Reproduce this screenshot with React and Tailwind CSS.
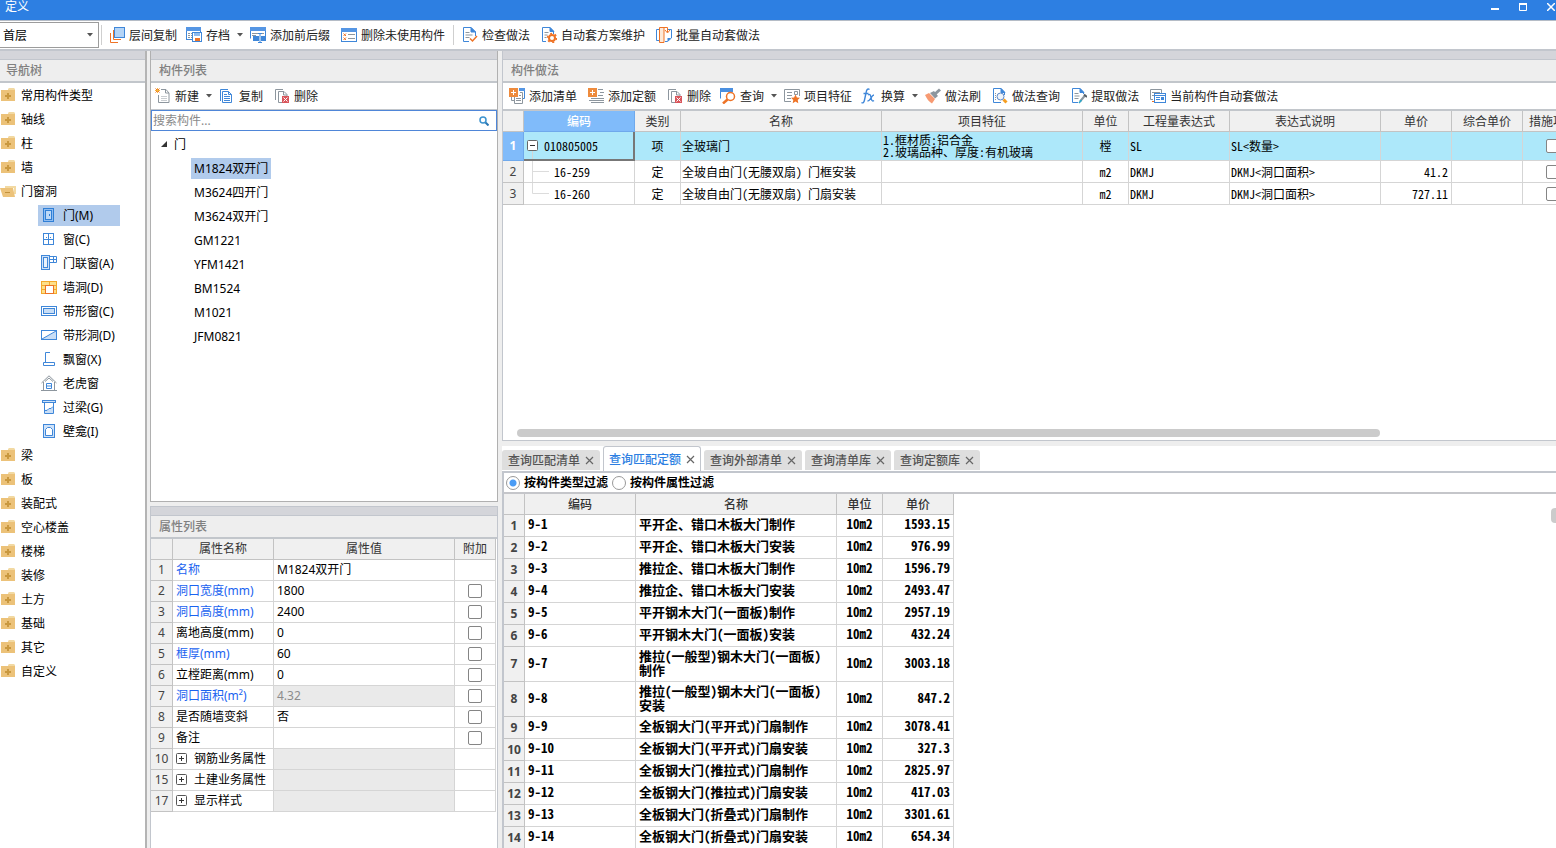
import React, { useState } from 'react';

const BLUE = '#3f87d9';
const ORANGE = '#ee7326';
const GRAY = '#8d969e';

const Svg = ({ children, w = 16, crisp = true, className = '' }) => (
  <svg
    width={w}
    height="16"
    viewBox={`0 0 ${w} 16`}
    fill="none"
    aria-hidden="true"
    shapeRendering={crisp ? 'crispEdges' : 'auto'}
    className={`shrink-0 ${className}`}
  >
    {children}
  </svg>
);

const Deleted = () => (
  <>
    <rect x="8" y="8" width="7" height="7" fill="#d9565c" />
    <path d="M9.5 9.5l4 4M13.5 9.5l-4 4" stroke="#fff" shapeRendering="auto" />
  </>
);

const icons = {
  layers: (
    <Svg>
      <path d="M1.5 6v9.5H9M4.5 3v9.5H12" stroke={ORANGE} shapeRendering="auto" />
      <rect x="5.500" y="0.500" width="10" height="10" fill="#b5d5f7" stroke={BLUE} shapeRendering="auto" />
    </Svg>
  ),
  archive: (
    <Svg crisp={false}>
      <rect x="0.5" y="0.5" width="14" height="12" fill="#fff" stroke={BLUE} />
      <rect width="15" height="4" fill="#5596e4" />
      <path d="M2 6.500h2M5 6.500h3M2 8.500h2M5 8.500h2M2 10.500h2M5 10.500h2" stroke={GRAY} />
      <rect x="6.500" y="5.500" width="9" height="9" fill="#fff" stroke={BLUE} />
      <rect x="8" y="6" width="6" height="3" fill="#8fbbee" />
      <rect x="9" y="11" width="5" height="3" fill={ORANGE} />
    </Svg>
  ),
  affix: (
    <Svg crisp={false}>
      <path d="M0.500 11.500V0.500h15v11" stroke={BLUE} />
      <rect width="16" height="4" fill="#5596e4" />
      <path d="M2 6.500h6M2 8.500h4M12 6.500h2" stroke={GRAY} />
      <rect x="3" y="9" width="6" height="5" fill={BLUE} />
      <rect x="11" y="9" width="5" height="5" fill={BLUE} />
      <path d="M10 6v9M8 6.500h4M8 15.500h4" stroke={BLUE} />
    </Svg>
  ),
  unused: (
    <Svg crisp={false}>
      <rect x="0.500" y="1.500" width="15" height="13" fill="#fff" stroke={BLUE} />
      <rect y="1" width="16" height="4" fill="#5596e4" />
      <path d="M2.500 6.500l2.500 2.500M5 6.500L2.500 9M2.500 10.500l2.500 2.500M5 10.500l-2.500 2.500" stroke={ORANGE} />
      <path d="M7 7.500h7M7 11.500h7" stroke={GRAY} />
    </Svg>
  ),
  check: (
    <Svg crisp={false}>
      <path d="M13.500 9V5L9 0.500H1.500v14H7" fill="#fff" stroke={BLUE} />
      <path d="M9 0.500V5h4.500z" fill={BLUE} stroke={BLUE} />
      <path d="M3.500 5.500h4M3.500 8h7M3.500 10.500h4" stroke={GRAY} />
      <path d="M8 11.500l2.500 2.500 4.500-5" stroke={ORANGE} strokeWidth="1.500" />
    </Svg>
  ),
  gear: (
    <Svg crisp={false}>
      <path d="M12.500 7V4.500L9 0.500H1.500v14H5" fill="#fff" stroke={BLUE} />
      <path d="M9 0.500v4h4z" fill={BLUE} stroke={BLUE} />
      <path d="M3.500 5.500h4M3.500 8h3M3.500 10.500h2" stroke={GRAY} />
      <circle cx="11" cy="11" r="3" fill="#fff" stroke={ORANGE} strokeWidth="2" />
      <circle cx="11" cy="11" r="4.500" stroke={ORANGE} strokeWidth="1.500" strokeDasharray="2 2.700" />
    </Svg>
  ),
  batch: (
    <Svg crisp={false}>
      <path d="M3 2.500H0.500v11H3M11 2.500h4.500V11l-4 3.500H9" stroke={BLUE} />
      <path d="M3.500 15.500V0.500H8v15z" fill="#fde9d8" stroke={ORANGE} />
      <path d="M6 0.500h5.500V5M9 3l2.500 3L14 3" stroke={ORANGE} />
      <path d="M15 11h-3.500v3.500z" fill={BLUE} />
    </Svg>
  ),
  create: (
    <Svg crisp={false}>
      <path d="M6 1.500h5l3 3.500v9.500H3.500V7" fill="#fff" stroke={GRAY} />
      <path d="M10.500 1.500V5H14" stroke={GRAY} />
      <path d="M6 8.500h6M6 10.500h6M6 12.500h6" stroke="#c9cdd1" />
      <path d="M0.500 0.500l4 4M4.500 0.500l-4 4" stroke={ORANGE} />
      <path d="M2.500 0v5M0 2.500h5" stroke="#f3b33c" />
    </Svg>
  ),
  copy: (
    <Svg crisp={false}>
      <path d="M1.500 13V1.500H9" stroke={BLUE} />
      <path d="M3.500 3.500h6l3 3v8h-9z" fill="#fff" stroke={BLUE} />
      <path d="M9.500 3.500v3h3" stroke={BLUE} />
      <path d="M5 6.500h3M5 8.500h6M5 10.500h6M5 12.500h6" stroke={BLUE} />
    </Svg>
  ),
  remove: (
    <Svg crisp={false}>
      <path d="M1.500 12V1.500H9" stroke={GRAY} />
      <path d="M8 14.500H4.500v-11H10l3 3V8" fill="#fff" stroke={GRAY} />
      <path d="M9.500 3.500V7H13" stroke={GRAY} />
      <Deleted />
    </Svg>
  ),
  addList: (
    <Svg crisp={false}>
      <path d="M10 1.500h5.500v9H14" stroke={BLUE} />
      <rect x="10" width="6" height="3" fill="#5596e4" />
      <path d="M2.500 9v3.500H5M11 4.500h2.500M5.500 9v6.500h8v-11M7 10.500h5M7 12.500h5M10 7.500h2" stroke={GRAY} />
      <rect width="9" height="9" fill="#ee8b3d" />
      <path d="M2 4.500h5M4.500 2v5" stroke="#fff" />
    </Svg>
  ),
  addQuota: (
    <Svg crisp={false}>
      <path d="M10 1.500h5M12 4.500h4M10 7.500h5M3 10.500h13M1 12.500h15M3 14.500h13" stroke={GRAY} />
      <rect width="9" height="9" fill="#ee8b3d" />
      <path d="M2 4.500h5M4.500 2v5" stroke="#fff" />
    </Svg>
  ),
  search: (
    <Svg crisp={false}>
      <path d="M0.500 10.500V1.500h12" stroke={BLUE} />
      <rect y="0" width="13" height="4" fill="#4a8fe0" />
      <circle cx="10.500" cy="8.500" r="4" fill="#fff" stroke={ORANGE} strokeWidth="1.500" />
      <path d="M7.500 11.500L3 15.500" stroke={ORANGE} strokeWidth="2.500" />
    </Svg>
  ),
  feature: (
    <Svg crisp={false}>
      <path d="M7 13.500H0.500v-12h15V8" fill="#fff" stroke={GRAY} />
      <path d="M3 4.500h5M3 7.500h5M3 10.500h4M10.500 3.500h3v3h-3z" stroke={GRAY} />
      <path d="M11.500 6.500l1.400 2.900 3.100.4-2.300 2.200.6 3.200-2.800-1.600-2.800 1.600.6-3.200L7 9.800l3.100-.4z" fill={ORANGE} />
    </Svg>
  ),
  fx: (
    <Svg crisp={false}>
      <path d="M8.500 1.500C6.500 0 5.500 2 5 5L3.500 12c-.5 2.500-1.500 3.500-3 2.500M2.500 5.500h5" stroke={BLUE} strokeWidth="1.400" />
      <path d="M7 7c2-1.500 2.500 0 3 2.500s1 4.500 3 3M13 7c-2.500 0-3.500 6-6.500 6" stroke={BLUE} strokeWidth="1.300" />
    </Svg>
  ),
  brush: (
    <Svg crisp={false}>
      <path d="M0 7l4-2 6 6-3 4.500C4 14 2 11 0 7z" fill="#f79a72" />
      <path d="M5 5l4-2 4 5-3 2.500z" fill={GRAY} />
      <path d="M10 6l5-4.500" stroke={GRAY} strokeWidth="3" />
    </Svg>
  ),
  inspect: (
    <Svg crisp={false}>
      <path d="M12.500 7V4.500L9 0.500H1.500v14H9" fill="#fff" stroke={BLUE} />
      <path d="M9 0.500v4h4z" fill={BLUE} stroke={BLUE} />
      <circle cx="8.500" cy="8.500" r="3.500" fill="#eef4fb" stroke="#5d89c9" />
      <path d="M3.500 5v8" stroke={GRAY} strokeDasharray="1 1" />
      <path d="M11.500 11.500l3 3" stroke="#f59d1f" strokeWidth="3" />
    </Svg>
  ),
  extract: (
    <Svg crisp={false}>
      <path d="M12.500 6V4.500L9 0.500H1.500v14H7" fill="#fff" stroke={BLUE} />
      <path d="M9 0.500v4h4z" fill={BLUE} stroke={BLUE} />
      <path d="M3.500 5.500h4M3.500 8h5M3.500 10.500h4" stroke={GRAY} />
      <path d="M9 13.500l5-6" stroke={GRAY} strokeWidth="2" />
      <path d="M13 6.500l3 2.500" stroke="#555e66" strokeWidth="2" />
      <path d="M8 15l2.500-3" stroke="#2aa7c9" strokeWidth="1.500" />
    </Svg>
  ),
  current: (
    <Svg crisp={false}>
      <path d="M3 11.500H0.500v-10h11V5M2 4.500h8M2 7.500h2" stroke={GRAY} />
      <path d="M2 13.500h2" stroke={ORANGE} />
      <rect x="4.500" y="5.500" width="11" height="9" fill="#fff" stroke={BLUE} />
      <path d="M5 7.500h10M6 9.500h4M6 11.500h4" stroke={BLUE} />
      <rect x="11" y="9" width="3" height="3" fill={BLUE} />
    </Svg>
  ),
  door: (
    <Svg crisp={false}>
      <rect x="2.500" y="1.500" width="10" height="13" fill="#8fbcf0" stroke="#2f7fd6" />
      <rect x="4.500" y="3.500" width="6" height="9" fill="#bcd8f7" stroke="#2f7fd6" />
      <path d="M8.500 7v2" stroke="#2f7fd6" />
    </Svg>
  ),
  window: (
    <Svg crisp={false}>
      <rect x="2.500" y="2.500" width="10" height="11" fill="#fff" stroke={BLUE} />
      <path d="M7.500 3v10M3 8.500h9M5 6.500h1M9 6.500h1" stroke={BLUE} />
    </Svg>
  ),
  doorWindow: (
    <Svg crisp={false}>
      <rect x="0.500" y="0.500" width="8" height="14" fill="#cfe2f8" stroke={BLUE} />
      <rect x="2.500" y="2.500" width="4" height="10" fill="#e9f2fc" stroke={BLUE} />
      <path d="M8.500 1.500h7v6h-7M12.500 2v5M9 4.500h6" stroke={BLUE} />
    </Svg>
  ),
  wallHole: (
    <Svg crisp={false}>
      <rect x="0.500" y="2.500" width="15" height="12" fill="#fde08a" stroke="#f3a92c" />
      <path d="M1 6.500h14M1 10.500h14M8.500 3v3" stroke="#f3a92c" />
      <rect x="4.500" y="6.500" width="8" height="8" fill="#fff" stroke={ORANGE} />
    </Svg>
  ),
  stripWindow: (
    <Svg crisp={false}>
      <rect x="0.500" y="3.500" width="15" height="9" fill="#fff" stroke={BLUE} />
      <rect x="2.500" y="5.500" width="11" height="5" fill="#c9def6" stroke={BLUE} />
    </Svg>
  ),
  stripHole: (
    <Svg crisp={false}>
      <rect x="0.500" y="3.500" width="15" height="9" fill="#fff" stroke={BLUE} />
      <path d="M1 12l14-8v8z" fill="#c9def6" />
      <path d="M1 12l14-8" stroke={BLUE} />
    </Svg>
  ),
  bayWindow: (
    <Svg crisp={false}>
      <path d="M9 1.500H4.500V11M2.500 11.500h11v3h-11z" stroke={BLUE} />
    </Svg>
  ),
  dormer: (
    <Svg crisp={false}>
      <path d="M0.500 8L8 0.800 15.500 8M2.500 7v8M13.500 7v8M0 15.500h16M4 6.500L8 3l4 3.500" stroke={GRAY} />
      <path d="M5.500 8.500h5v5h-5zM6 11h4" fill="#fff" stroke={BLUE} />
    </Svg>
  ),
  lintel: (
    <Svg crisp={false}>
      <rect x="1.500" y="1.500" width="13" height="2" fill="#cfe2f8" stroke={BLUE} />
      <path d="M4 14v-3l4-1 4-2v6z" fill="#c9def6" />
      <path d="M3.500 4v10.500h9V4" stroke={BLUE} />
      <path d="M4 11.500h2l2-2h2l2-2" stroke={BLUE} />
    </Svg>
  ),
  niche: (
    <Svg crisp={false}>
      <rect x="2.500" y="1.500" width="11" height="13" fill="#cfe2f8" stroke={BLUE} />
      <path d="M4.500 12.500V6.500L6.500 4.500h3l2 2v6z" fill="#fff" stroke={BLUE} />
    </Svg>
  ),
};

const FolderIcon = ({ open }) =>
  open ? (
    <Svg>
      <path d="M5 3h11v8h-2V5H5z" fill="#f2d9a2" />
      <path d="M0 5h13l2 9H3z" fill="#ecc279" shapeRendering="auto" />
      <rect x="5" y="9" width="5" height="1" fill="#c2913c" />
    </Svg>
  ) : (
    <Svg>
      <path d="M8 2l1-1h5l1 1v1H8z" fill="#f2d9a2" shapeRendering="auto" />
      <rect x="1" y="3" width="14" height="11" fill="#ecc279" />
      <path d="M5 8h2v-2h2v2h2v2h-2v2h-2v-2h-2z" fill="#c9983f" />
    </Svg>
  );

const Caret = () => (
  <svg width="6" height="4" viewBox="0 0 6 4" className="ml-[3px] shrink-0" aria-hidden="true">
    <path d="M0 0h6L3 3.500z" fill="#555" />
  </svg>
);

const ToolButton = ({ icon, label, menu }) => (
  <button
    type="button"
    aria-haspopup={menu ? 'menu' : undefined}
    className={`flex h-5 shrink-0 items-center gap-1 whitespace-nowrap text-[#222] hover:bg-[#e6f0fb] ${menu ? 'pr-px pl-[3px]' : 'px-[5px]'}`}
  >
    {icons[icon]}
    {label}
    {menu && <Caret />}
  </button>
);

const ToolBar = ({ items, className = '' }) => (
  <div className={`flex shrink-0 items-center gap-px overflow-hidden bg-white ${className}`}>
    {items.map((item) => (
      <ToolButton key={item.label} {...item} />
    ))}
  </div>
);

const PanelTitle = ({ children }) => (
  <div className="shrink-0">
    <div className="h-[9px] border-b border-[#c2c6cd] bg-[#d4d5da]" />
    <h2 className="flex h-[23px] items-center border-b-2 border-[#c2c6cb] bg-[#eeeeee] pl-2 font-medium text-[#808080]">
      {children}
    </h2>
  </div>
);

const Check = ({ label }) => (
  <input
    type="checkbox"
    aria-label={label}
    className="block size-[14px] shrink-0 appearance-none rounded-[2px] border border-[#858585] bg-white checked:bg-[#2d7fe2]"
  />
);

const mainTools = [
  { icon: 'layers', label: '层间复制' },
  { icon: 'archive', label: '存档', menu: true },
  { icon: 'affix', label: '添加前后缀' },
  { icon: 'unused', label: '删除未使用构件' },
];

const checkTools = [
  { icon: 'check', label: '检查做法' },
  { icon: 'gear', label: '自动套方案维护' },
  { icon: 'batch', label: '批量自动套做法' },
];

const componentTools = [
  { icon: 'create', label: '新建', menu: true },
  { icon: 'copy', label: '复制' },
  { icon: 'remove', label: '删除' },
];

const methodTools = [
  { icon: 'addList', label: '添加清单' },
  { icon: 'addQuota', label: '添加定额' },
  { icon: 'remove', label: '删除' },
  { icon: 'search', label: '查询', menu: true },
  { icon: 'feature', label: '项目特征' },
  { icon: 'fx', label: '换算', menu: true },
  { icon: 'brush', label: '做法刷' },
  { icon: 'inspect', label: '做法查询' },
  { icon: 'extract', label: '提取做法' },
  { icon: 'current', label: '当前构件自动套做法' },
];

const navItems = [
  { name: '常用构件类型' },
  { name: '轴线' },
  { name: '柱' },
  { name: '墙' },
  {
    name: '门窗洞',
    children: [
      { icon: 'door', name: '门(M)' },
      { icon: 'window', name: '窗(C)' },
      { icon: 'doorWindow', name: '门联窗(A)' },
      { icon: 'wallHole', name: '墙洞(D)' },
      { icon: 'stripWindow', name: '带形窗(C)' },
      { icon: 'stripHole', name: '带形洞(D)' },
      { icon: 'bayWindow', name: '飘窗(X)' },
      { icon: 'dormer', name: '老虎窗' },
      { icon: 'lintel', name: '过梁(G)' },
      { icon: 'niche', name: '壁龛(I)' },
    ],
  },
  { name: '梁' },
  { name: '板' },
  { name: '装配式' },
  { name: '空心楼盖' },
  { name: '楼梯' },
  { name: '装修' },
  { name: '土方' },
  { name: '基础' },
  { name: '其它' },
  { name: '自定义' },
];

const components = ['M1824双开门', 'M3624四开门', 'M3624双开门', 'GM1221', 'YFM1421', 'BM1524', 'M1021', 'JFM0821'];

const properties = [
  { no: 1, name: '名称', value: 'M1824双开门', blue: true, noCheck: true },
  { no: 2, name: '洞口宽度(mm)', value: '1800', blue: true },
  { no: 3, name: '洞口高度(mm)', value: '2400', blue: true },
  { no: 4, name: '离地高度(mm)', value: '0' },
  { no: 5, name: '框厚(mm)', value: '60', blue: true },
  { no: 6, name: '立樘距离(mm)', value: '0' },
  { no: 7, name: '洞口面积(m²)', value: '4.32', blue: true, readOnly: true },
  { no: 8, name: '是否随墙变斜', value: '否' },
  { no: 9, name: '备注', value: '' },
  { no: 10, name: '钢筋业务属性', group: true },
  { no: 15, name: '土建业务属性', group: true },
  { no: 17, name: '显示样式', group: true },
];

const methodRows = [
  { no: 2, code: '16-259', name: '全玻自由门(无腰双扇) 门框安装', price: '41.2' },
  { no: 3, code: '16-260', name: '全玻自由门(无腰双扇) 门扇安装', price: '727.11', last: true },
];

const quotas = [
  ['9-1', '平开企、错口木板大门制作', '1593.15'],
  ['9-2', '平开企、错口木板大门安装', '976.99'],
  ['9-3', '推拉企、错口木板大门制作', '1596.79'],
  ['9-4', '推拉企、错口木板大门安装', '2493.47'],
  ['9-5', '平开钢木大门(一面板)制作', '2957.19'],
  ['9-6', '平开钢木大门(一面板)安装', '432.24'],
  ['9-7', '推拉(一般型)钢木大门(一面板)制作', '3003.18'],
  ['9-8', '推拉(一般型)钢木大门(一面板)安装', '847.2'],
  ['9-9', '全板钢大门(平开式)门扇制作', '3078.41'],
  ['9-10', '全板钢大门(平开式)门扇安装', '327.3'],
  ['9-11', '全板钢大门(推拉式)门扇制作', '2825.97'],
  ['9-12', '全板钢大门(推拉式)门扇安装', '417.03'],
  ['9-13', '全板钢大门(折叠式)门扇制作', '3301.61'],
  ['9-14', '全板钢大门(折叠式)门扇安装', '654.34'],
];

const tabs = ['查询匹配清单', '查询匹配定额', '查询外部清单', '查询清单库', '查询定额库'];

const HEAD = 'border-r border-b border-[#c3c3c3] bg-[#f0f0f0] p-0 text-center font-normal text-[#333]';
const NUM = 'border-r border-b border-[#c3c3c3] bg-[#f0f0f0] p-0 text-center text-[#444]';
const CELL = 'border-r border-b border-[#d5d5d5]';

const NavTree = () => {
  const [selected, setSelected] = useState('门(M)');

  return (
    <aside className="flex w-[147px] shrink-0 flex-col border-r-2 border-[#b4b4b4] bg-white">
      <PanelTitle>
        <span className="-ml-[2px]">导航树</span>
      </PanelTitle>
      <ul className="min-h-0 flex-1 overflow-hidden">
        {navItems.map((item) => (
          <li key={item.name}>
            <button type="button" className="flex h-6 items-center gap-[5px]">
              <FolderIcon open={!!item.children} />
              {item.name}
            </button>
            {item.children && (
              <ul>
                {item.children.map((child) => (
                  <li key={child.name} className="flex h-6 items-center pl-[38px]">
                    <button
                      type="button"
                      onClick={() => setSelected(child.name)}
                      className={`flex h-[21px] w-[82px] items-center gap-[6px] pl-[3px] whitespace-nowrap ${
                        selected === child.name ? 'bg-[#b1cbec]' : ''
                      }`}
                    >
                      {icons[child.icon]}
                      {child.name}
                    </button>
                  </li>
                ))}
              </ul>
            )}
          </li>
        ))}
      </ul>
    </aside>
  );
};

const ComponentList = () => {
  const [selected, setSelected] = useState(components[0]);

  return (
    <section className="flex min-h-0 flex-[451_451_0%] flex-col border-x border-b border-[#b0b0b0] bg-white">
      <PanelTitle>构件列表</PanelTitle>
      <ToolBar items={componentTools} className="h-[27px] border-b border-[#c2c6cb] pl-px" />
      <label className="flex h-[21px] shrink-0 items-center border border-[#4f86d8] pr-[7px]">
        <input
          type="text"
          aria-label="搜索构件"
          placeholder="搜索构件..."
          className="min-w-0 flex-1 pl-px outline-none placeholder:text-[#8a8a8a]"
        />
        <svg width="10" height="10" viewBox="0 0 10 10" fill="none" aria-hidden="true">
          <circle cx="4" cy="4" r="3" stroke="#3d93cf" strokeWidth="1.500" />
          <path d="M6.500 6.500L9.500 9.500" stroke="#2b78b5" strokeWidth="2" />
        </svg>
      </label>
      <div className="min-h-0 flex-1 overflow-hidden pt-px">
        <div className="flex h-6 items-center gap-[7px] pl-[10px]">
          <svg width="6" height="6" viewBox="0 0 6 6" aria-hidden="true">
            <path d="M6 0v6H0z" fill="#333" />
          </svg>
          门
        </div>
        <ul>
          {components.map((name) => (
            <li key={name} className="flex h-6 items-center pl-10">
              <button
                type="button"
                onClick={() => setSelected(name)}
                className={`h-[21px] px-[3px] ${selected === name ? 'bg-[#b1cbec]' : ''}`}
              >
                {name}
              </button>
            </li>
          ))}
        </ul>
      </div>
    </section>
  );
};

const PropertyList = () => (
  <section className="flex min-h-0 flex-[342_342_0%] flex-col overflow-hidden border-x border-t border-[#c2c6cd] bg-white">
    <PanelTitle>属性列表</PanelTitle>
    <div className="pr-px">
      <table className="w-full table-fixed border-separate border-spacing-0">
        <colgroup>
          <col className="w-[22px]" />
          <col className="w-[101px]" />
          <col />
          <col className="w-[41px]" />
        </colgroup>
        <thead>
          <tr className="h-[21px]">
            <th className={HEAD}></th>
            <th className={HEAD}>属性名称</th>
            <th className={HEAD}>属性值</th>
            <th className={HEAD}>附加</th>
          </tr>
        </thead>
        <tbody>
          {properties.map((p) => (
            <tr key={p.no} className="h-[21px]">
              <td className={NUM}>{p.no}</td>
              <td className={`${CELL} py-0 pr-0 pl-[3px] whitespace-nowrap ${p.blue ? 'text-[#1a63f0]' : ''}`}>
                {p.group ? (
                  <button type="button" className="flex items-center gap-[7px]">
                    <svg width="11" height="11" viewBox="0 0 11 11" fill="none" aria-hidden="true">
                      <rect x="0.500" y="0.500" width="10" height="10" rx="1" stroke="#555" />
                      <path d="M3 5.500h5M5.500 3v5" stroke="#333" />
                    </svg>
                    {p.name}
                  </button>
                ) : (
                  p.name
                )}
              </td>
              <td className={`${CELL} px-[3px] py-0 ${p.readOnly || p.group ? 'bg-[#eaeaea] text-[#8c8c8c]' : ''}`}>
                {p.value}
              </td>
              <td className={`${CELL} p-0`}>
                {!p.noCheck && !p.group && (
                  <div className="flex justify-center">
                    <Check label={`附加 ${p.name}`} />
                  </div>
                )}
              </td>
            </tr>
          ))}
        </tbody>
      </table>
    </div>
  </section>
);

const MethodTable = () => (
  <table className="w-[1081px] table-fixed border-separate border-spacing-0">
    <colgroup>
      <col className="w-[21px]" />
      <col className="w-[111px]" />
      <col className="w-[46px]" />
      <col className="w-[201px]" />
      <col className="w-[201px]" />
      <col className="w-[46px]" />
      <col className="w-[101px]" />
      <col className="w-[151px]" />
      <col className="w-[71px]" />
      <col className="w-[71px]" />
      <col className="w-[61px]" />
    </colgroup>
    <thead>
      <tr className="h-[21px]">
        <th className={HEAD}></th>
        <th className="border-r border-b border-[#6fa9ec] bg-[#80bbfa] p-0 text-center font-medium text-white">编码</th>
        {['类别', '名称', '项目特征', '单位', '工程量表达式', '表达式说明', '单价', '综合单价', '措施项目'].map((h) => (
          <th key={h} className={`${HEAD} whitespace-nowrap`}>
            {h}
          </th>
        ))}
      </tr>
    </thead>
    <tbody className="font-['Noto_Sans_CJK_SC',sans-serif] leading-3 whitespace-nowrap [font-feature-settings:'hwid']">
      <tr className="h-[29px] bg-[#ade8fa]">
        <td className="border-r border-b border-[#6fa9ec] bg-[#80bbfa] p-0 text-center font-['Noto_Sans'] font-bold text-white">
          1
        </td>
        <td className="border-r-2 border-b-2 border-[#777] p-0">
          <div className="flex h-[27px] items-center gap-[6px]">
            <svg width="14" height="27" viewBox="0 0 14 27" fill="none" aria-hidden="true">
              <path d="M8.500 19v8" stroke="#d5d5d5" />
              <rect x="3.500" y="8.500" width="10" height="10" rx="1" fill="#fff" stroke="#666" />
              <path d="M6 13.500h5" stroke="#333" />
            </svg>
            010805005
          </div>
        </td>
        <td className={`${CELL} p-0 text-center`}>项</td>
        <td className={`${CELL} px-px py-0`}>全玻璃门</td>
        <td className={`${CELL} px-px py-0`}>
          1.框材质:铝合金
          <br />
          2.玻璃品种、厚度:有机玻璃
        </td>
        <td className={`${CELL} p-0 text-center`}>樘</td>
        <td className={`${CELL} px-px py-0`}>SL</td>
        <td className={`${CELL} px-px py-0`}>SL&lt;数量&gt;</td>
        <td className={CELL}></td>
        <td className={CELL}></td>
        <td className={`${CELL} p-0`}>
          <div className="flex justify-center">
            <Check label="措施项目 010805005" />
          </div>
        </td>
      </tr>
      {methodRows.map((row) => (
        <tr key={row.no} className="h-[22px]">
          <td className={`${NUM} font-['Noto_Sans']`}>{row.no}</td>
          <td className={`${CELL} p-0`}>
            <div className="flex h-[21px] items-center gap-[5px]">
              <svg width="25" height="21" viewBox="0 0 25 21" fill="none" aria-hidden="true">
                <path d={row.last ? 'M8.500 0v10.500H25' : 'M8.500 0v21M8.500 10.500H25'} stroke="#dcdcdc" />
              </svg>
              {row.code}
            </div>
          </td>
          <td className={`${CELL} p-0 text-center`}>定</td>
          <td className={`${CELL} px-px py-0`}>{row.name}</td>
          <td className={CELL}></td>
          <td className={`${CELL} p-0 text-center`}>m2</td>
          <td className={`${CELL} px-px py-0`}>DKMJ</td>
          <td className={`${CELL} px-px py-0`}>DKMJ&lt;洞口面积&gt;</td>
          <td className={`${CELL} px-[3px] py-0 text-right`}>{row.price}</td>
          <td className={CELL}></td>
          <td className={`${CELL} p-0`}>
            <div className="flex justify-center">
              <Check label={`措施项目 ${row.code}`} />
            </div>
          </td>
        </tr>
      ))}
    </tbody>
  </table>
);

const QuotaTable = () => (
  <table className="w-[450px] table-fixed border-separate border-spacing-0">
    <colgroup>
      <col className="w-[21px]" />
      <col className="w-[111px]" />
      <col className="w-[201px]" />
      <col className="w-[46px]" />
      <col className="w-[71px]" />
    </colgroup>
    <thead>
      <tr className="h-[21px]">
        <th className={HEAD}></th>
        {['编码', '名称', '单位', '单价'].map((h) => (
          <th key={h} className={HEAD}>
            <span className="font-medium">{h}</span>
          </th>
        ))}
      </tr>
    </thead>
    <tbody className="font-['Noto_Sans_CJK_SC',sans-serif] text-[13px] leading-[14px] font-bold [font-feature-settings:'hwid']">
      {quotas.map(([code, name, price], i) => (
        <tr key={code} className={name.length > 16 ? 'h-[35px]' : 'h-[22px]'}>
          <td className={`${NUM} font-['Noto_Sans'] text-xs`}>{i + 1}</td>
          <td className={`${CELL} px-[3px] pt-0 pb-[3px]`}>{code}</td>
          <td className={`${CELL} px-[3px] pt-0 pb-[3px]`}>{name}</td>
          <td className={`${CELL} px-0 pt-0 pb-[3px] text-center`}>10m2</td>
          <td className={`${CELL} px-[3px] pt-0 pb-[3px] text-right`}>{price}</td>
        </tr>
      ))}
    </tbody>
  </table>
);

const QueryPanel = () => {
  const [activeTab, setActiveTab] = useState('查询匹配定额');
  const [filter, setFilter] = useState('type');

  const filters = [
    { id: 'type', label: '按构件类型过滤' },
    { id: 'property', label: '按构件属性过滤' },
  ];

  return (
    <section className="flex min-h-0 flex-[403_403_0%] flex-col overflow-hidden bg-white">
      <div className="flex h-[25px] shrink-0 items-end gap-[3px]">
        {tabs.map((tab) => (
          <div
            key={tab}
            className={`flex shrink-0 items-center gap-[5px] rounded-t-[3px] ${
              activeTab === tab
                ? 'h-[25px] border border-b-0 border-[#c2c6cd] bg-white px-[5px] text-[#2d7fe2]'
                : 'mb-px h-5 bg-[#dedede] px-[6px] text-[#555]'
            }`}
          >
            <button type="button" onClick={() => setActiveTab(tab)} className="font-medium whitespace-nowrap">
              {tab}
            </button>
            <button type="button" aria-label={`关闭 ${tab}`} className="text-[#666]">
              <svg width="9" height="9" viewBox="0 0 9 9" aria-hidden="true">
                <path d="M1 1l7 7M8 1l-7 7" stroke="currentColor" strokeWidth="1.200" />
              </svg>
            </button>
          </div>
        ))}
      </div>
      <div className="flex min-h-0 flex-1 flex-col border-t-2 border-l-2 border-[#c2c6cd]">
        <div className="flex h-[21px] shrink-0 items-center gap-1 border-b-2 border-[#c5c6ca] pl-[2px]">
          {filters.map((f) => (
            <label key={f.id} className="flex items-center gap-1 font-bold">
              <input
                type="radio"
                name="filter"
                checked={filter === f.id}
                onChange={() => setFilter(f.id)}
                className="size-[14px] appearance-none rounded-full border border-[#999] bg-white checked:bg-[radial-gradient(circle,#4a9cf5_3px,#fff_4px)]"
              />
              {f.label}
            </label>
          ))}
        </div>
        <div className="relative min-h-0 flex-1 overflow-hidden">
          <QuotaTable />
          <div className="absolute top-[14px] -right-[6px] h-[15px] w-[11px] rounded-[4px] bg-[#cbcbcb]" />
        </div>
      </div>
    </section>
  );
};

const App = () => {
  return (
    <div className="flex h-screen flex-col overflow-hidden bg-[#eeeeee] font-['Noto_Sans','Noto_Sans_CJK_SC',sans-serif] text-xs leading-[17px] text-black">
      <header className="flex h-[21px] shrink-0 items-start justify-between border-b border-[#b5bcc6] bg-[#2d7fe2] text-white">
        <h1 className="pl-[5px] leading-[14px]">定义</h1>
        <div className="-mr-[9px] flex">
          <button type="button" aria-label="最小化" className="flex h-[14px] w-7 items-center justify-center">
            <svg width="8" height="8" viewBox="0 0 8 8" aria-hidden="true">
              <path d="M0 6h8" stroke="#fff" strokeWidth="2" />
            </svg>
          </button>
          <button type="button" aria-label="最大化" className="flex h-[14px] w-7 items-center justify-center">
            <svg width="8" height="8" viewBox="0 0 8 8" fill="none" aria-hidden="true">
              <path d="M0.500 1v6.500h7V1" stroke="#fff" />
              <path d="M0 1h8" stroke="#fff" strokeWidth="2" />
            </svg>
          </button>
          <button type="button" aria-label="关闭" className="flex h-[14px] w-7 items-center justify-center">
            <svg width="8" height="8" viewBox="0 0 8 8" aria-hidden="true">
              <path d="M0 0l8 8M8 0L0 8" stroke="#fff" strokeWidth="1.500" />
            </svg>
          </button>
        </div>
      </header>

      <div className="flex h-[30px] shrink-0 items-center overflow-hidden border-b-2 border-[#c2c6cd] bg-white">
        <div className="relative shrink-0">
          <select
            aria-label="楼层"
            defaultValue="首层"
            className="block h-[26px] w-[99px] appearance-none border border-l-0 border-[#9c9c9c] bg-white pl-[3px]"
          >
            <option>首层</option>
            <option>第2层</option>
            <option>基础层</option>
          </select>
          <svg width="6" height="4" viewBox="0 0 6 4" className="pointer-events-none absolute top-[11px] right-[6px]" aria-hidden="true">
            <path d="M0 0h6L3 3.500z" fill="#555" />
          </svg>
        </div>
        <div className="ml-[2px] h-5 w-px shrink-0 bg-[#cfcfcf]" />
        <ToolBar items={mainTools} className="h-7 pl-[2px]" />
        <div className="ml-[3px] h-5 w-px shrink-0 bg-[#cfcfcf]" />
        <ToolBar items={checkTools} className="h-7 pl-[3px]" />
      </div>

      <main className="flex min-h-0 flex-1">
        <NavTree />

        <div className="ml-[3px] flex w-[348px] shrink-0 flex-col gap-1">
          <ComponentList />
          <PropertyList />
        </div>

        <div className="ml-1 flex min-w-0 flex-1 flex-col gap-[5px]">
          <section className="flex min-h-0 flex-[390_390_0%] flex-col overflow-hidden border-b border-l border-[#c2c6cd] bg-white">
            <PanelTitle>构件做法</PanelTitle>
            <ToolBar items={methodTools} className="h-7 border-b-2 border-[#c2c6cb] pl-px" />
            <div className="min-h-0 flex-1 overflow-hidden">
              <MethodTable />
            </div>
            <div className="mb-[3px] ml-[14px] h-2 w-[82%] shrink-0 rounded-full bg-[#cbcbcb]" />
          </section>
          <QueryPanel />
        </div>
      </main>
    </div>
  );
};

export default App;
